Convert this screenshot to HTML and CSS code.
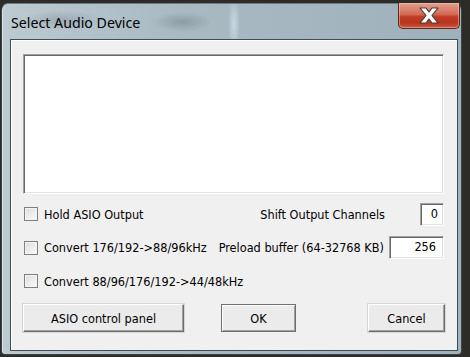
FILE: index.html
```html
<!DOCTYPE html>
<html lang="en">
<head>
    <meta charset="UTF-8">
    <title>Select Audio Device</title>
    <link rel="stylesheet" href="styles.css">
</head>
<body>
    <div class="window">
        <div class="titlebar">
            <span class="title">Select Audio Device</span>
            <div class="close">
                <svg width="22" height="17" viewBox="0 0 22 17">
                    <path d="M2 1h6l3 4 3-4h6l-6 7.5 6 7.5h-6l-3-4-3 4H2l6-7.5z" fill="#fff" stroke="#4a3c38" stroke-width="1.2" stroke-linejoin="round"/>
                </svg>
            </div>
        </div>
        <div class="client">
            <div class="devices"></div>

            <div class="row row-1">
                <label class="check"><span class="box"></span>Hold ASIO Output</label>
                <div class="field field-shift">
                    <span>Shift Output Channels</span>
                    <div class="edit small">0</div>
                </div>
            </div>

            <div class="row row-2">
                <label class="check"><span class="box"></span>Convert 176/192-&gt;88/96kHz</label>
                <div class="field">
                    <span>Preload buffer (64-32768 KB)</span>
                    <div class="edit wide">256</div>
                </div>
            </div>

            <div class="row row-3">
                <label class="check"><span class="box"></span>Convert 88/96/176/192-&gt;44/48kHz</label>
            </div>

            <div class="buttons">
                <button class="btn btn-asio">ASIO control panel</button>
                <button class="btn btn-ok">OK</button>
                <button class="btn btn-cancel">Cancel</button>
            </div>
        </div>
    </div>
</body>
</html>
```

FILE: styles.css
```css
body {
    margin: 0;
    height: 357px;
    overflow: hidden;
    background-color: #2e2c26;
    font-family: "DejaVu Sans Condensed", "DejaVu Sans", sans-serif;
    font-size: 12.6px;
    color: #000;
}
.window {
    box-sizing: border-box;
    width: 461px;
    height: 352px;
    margin: 3px 0 0 1px;
    padding: 0 3px 4px 8px;
    border-radius: 7px 7px 4px 4px;
    border: 1px solid #3b4248;
    border-top-color: #6d7a82;
    background:
        radial-gradient(ellipse 40px 10px at 60px 16px, rgba(110, 125, 135, 0.35), transparent),
        radial-gradient(ellipse 30px 10px at 180px 18px, rgba(90, 105, 115, 0.35), transparent),
        radial-gradient(ellipse 6px 30px at 232px 20px, rgba(225, 235, 245, 0.6), transparent),
        linear-gradient(to right, #bccad1, #a8b9c2 40%, #9fb1bb 100%);
    box-shadow: inset 1px 0 0 #d8e2e8;
}
.titlebar {
    display: flex;
    justify-content: space-between;
    align-items: flex-start;
    height: 35px;
    margin-left: -8px;
    margin-right: -2px;
}
.title {
    padding: 9px 0 0 9px;
    font-family: "Noto Sans", "Open Sans", sans-serif;
    font-size: 14.2px;
    color: #000;
}
.close {
    display: flex;
    align-items: center;
    justify-content: center;
    width: 62px;
    height: 26px;
    margin-top: -1px;
    box-sizing: border-box;
    border: 1px solid #5a2a22;
    border-top: none;
    border-radius: 0 0 5px 5px;
    background: linear-gradient(to bottom, #e3a090 0%, #d46b56 45%, #c03c25 55%, #b8351e 80%, #cc5a42 100%);
    box-shadow: inset 0 0 0 1px rgba(255, 210, 200, 0.45);
}
.client {
    box-sizing: border-box;
    height: 312px;
    padding: 14px 13px 0 12px;
    background-color: #f0f0f0;
    border: 1px solid #3f4d57;
    box-shadow: inset 1px 1px 0 #fff;
}
.devices {
    box-sizing: border-box;
    height: 140px;
    background-color: #fff;
    border: 1px solid #fff;
    border-top-color: #a0a0a0;
    border-left-color: #a0a0a0;
    box-shadow: inset 1px 1px 0 #696969, inset -1px -1px 0 #e3e3e3;
}
.row {
    display: flex;
    justify-content: space-between;
    align-items: center;
}
.row-1 {
    height: 24px;
    margin-top: 8px;
}
.row-2 {
    height: 23px;
    margin-top: 10px;
}
.row-3 {
    height: 22px;
    margin-top: 11px;
}
.check {
    display: flex;
    align-items: center;
    gap: 6px;
    padding-left: 1px;
}
.box {
    width: 14px;
    height: 14px;
    box-sizing: border-box;
    border: 1px solid #7f7f7f;
    background: linear-gradient(135deg, #dcdcdc, #fbfbfb);
    box-shadow: inset 0 0 0 1px #f4f4f4;
}
.field {
    display: flex;
    align-items: center;
    gap: 5px;
}
.field-shift {
    gap: 35px;
}
.edit {
    box-sizing: border-box;
    height: 23px;
    padding: 1px 5px 0 0;
    text-align: right;
    background-color: #fff;
    border: 1px solid #fff;
    border-top-color: #a0a0a0;
    border-left-color: #a0a0a0;
    box-shadow: inset 1px 1px 0 #696969, inset -1px -1px 0 #e3e3e3;
    line-height: 18px;
}
.small {
    width: 24px;
}
.wide {
    width: 55px;
    padding-right: 7px;
}
.buttons {
    display: flex;
    margin-top: 12px;
}
.btn {
    box-sizing: border-box;
    height: 28px;
    padding: 0;
    font-family: inherit;
    font-size: 12.6px;
    color: #000;
    background-color: #ebebeb;
    border: 1px solid #fff;
    border-right-color: #6f6f6f;
    border-bottom-color: #6f6f6f;
    box-shadow: inset -1px -1px 0 #a0a0a0, 0 0 0 1px #d6d6d6;
}
.btn-asio {
    width: 161px;
}
.btn-ok {
    width: 75px;
    margin-left: 37px;
    border-color: #6f6f6f;
    box-shadow: inset 1px 1px 0 #fff, inset -1px -1px 0 #a0a0a0;
}
.btn-cancel {
    width: 77px;
    margin-left: auto;
    margin-right: -1px;
}
```
